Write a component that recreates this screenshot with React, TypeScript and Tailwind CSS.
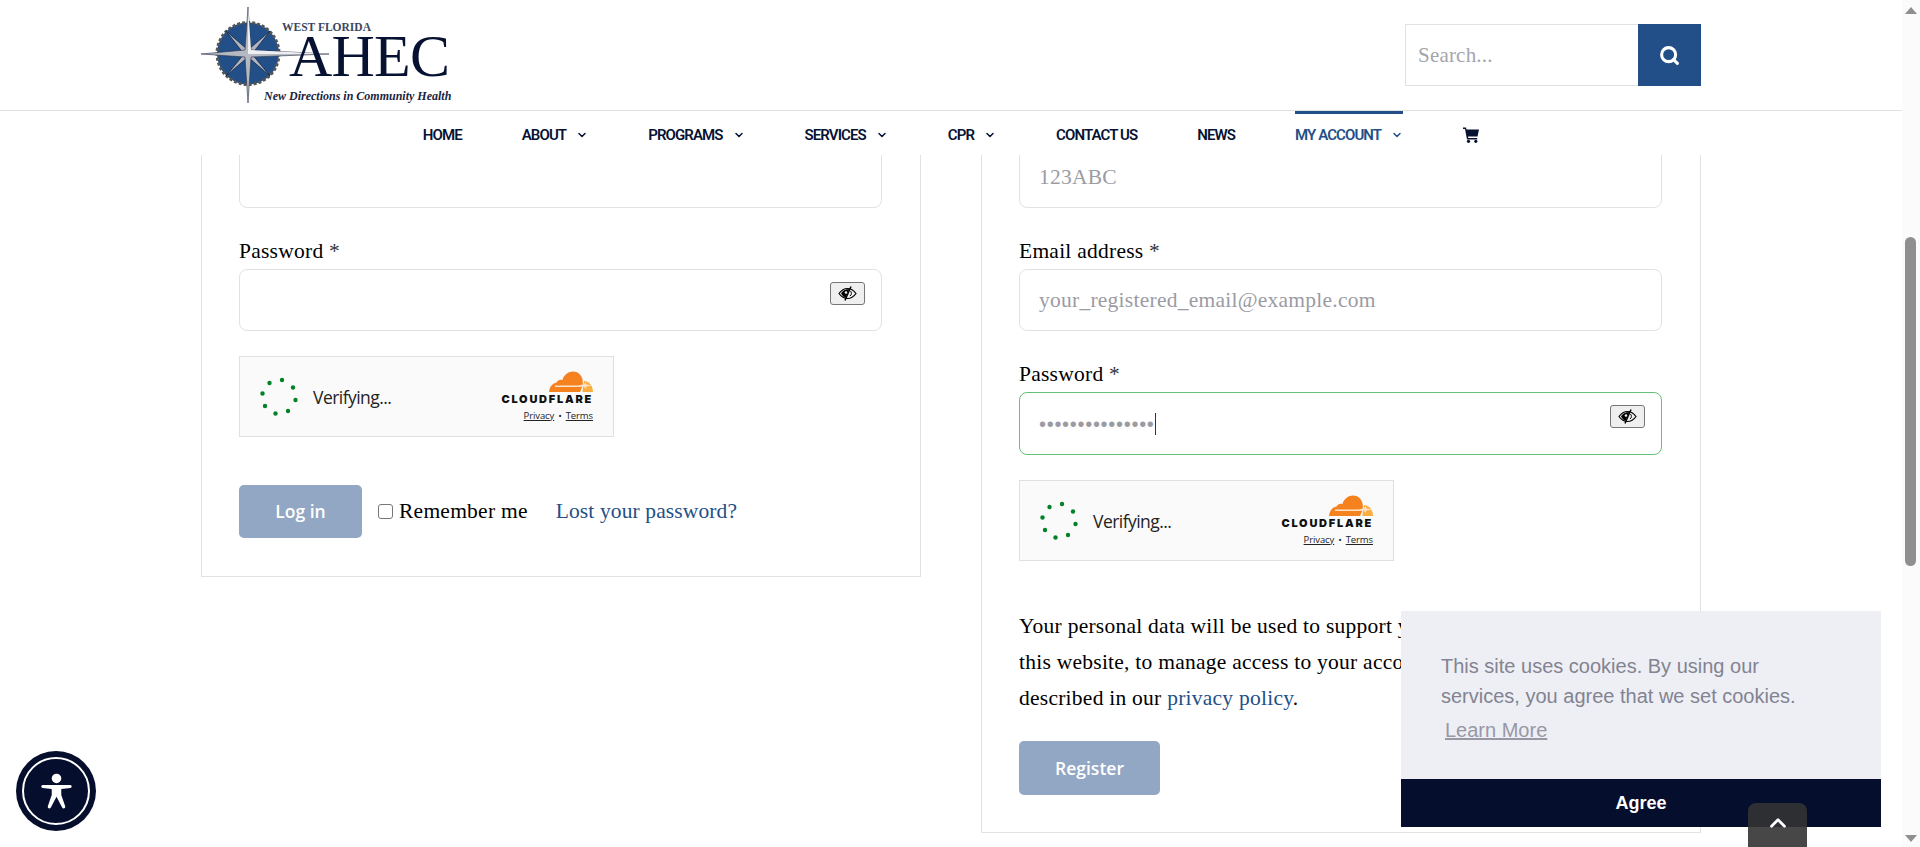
import { ChevronDown, ChevronUp, Search } from "lucide-react";

const NAV_ITEMS = [
  { label: "HOME" },
  { label: "ABOUT", caret: true },
  { label: "PROGRAMS", caret: true },
  { label: "SERVICES", caret: true },
  { label: "CPR", caret: true },
  { label: "CONTACT US" },
  { label: "NEWS" },
  { label: "MY ACCOUNT", caret: true, active: true },
];

const SERIF = "font-['Liberation_Serif',serif] text-[21.5px] tracking-[0.25px] text-black";

function Logo() {
  return (
    <a href="#" className="relative block w-[250px] h-[96px] mt-[7px]">
      <svg className="absolute left-0 top-0" width="132" height="96" viewBox="0 0 132 96">
        <circle cx="47" cy="46.500" r="31" fill="#224f87" stroke="#555" strokeWidth="3" strokeDasharray="3 2" />
        <path d="M25 24L47 43L69 24L51 47L69 69L47 50L25 69L43 47Z" fill="#aeb4c0" stroke="#0f1a36" strokeWidth="0.700" />
        <path d="M47 0L50 43L128 47L50 50L47 96L44 50L0 47L44 43Z" fill="#b4b9c4" stroke="#2c3347" strokeWidth="0.600" />
        <path d="M47 0L50 43L128 47L47 47Z" fill="#eceef1" />
      </svg>
      <span className="absolute left-[81px] top-[15px] font-['Liberation_Serif',serif] text-[11.500px] font-bold leading-none text-[#3b4560] whitespace-nowrap">
        WEST FLORIDA
      </span>
      <span className="absolute left-[88px] top-[27px] font-['Liberation_Serif',serif] text-[60px] leading-[44px] tracking-[-0.8px] text-[#071233] whitespace-nowrap">
        AHEC
      </span>
      <span className="absolute left-[63px] top-[83px] font-['Liberation_Serif',serif] text-[12px] font-bold italic leading-none text-[#1b2440] whitespace-nowrap">
        New Directions in Community Health
      </span>
    </a>
  );
}

function EyeButton() {
  return (
    <span className="absolute right-[16px] top-[12px] flex w-[35px] h-[23px] items-center justify-center rounded-[3px] border border-[#767676] bg-[#efefef]">
      <svg width="19" height="15" viewBox="0 0 19 15">
        <path d="M1 7.500C3.500 4 6 2.500 9.500 2.500C13 2.500 15.500 4 18 7.500C15.500 11 13 12.500 9.500 12.500C6 12.500 3.500 11 1 7.500Z" fill="none" stroke="#000" strokeWidth="1.200" />
        <path d="M3 7.500C5 4.500 7 3.200 11.500 3L7.500 12C5.500 11.500 4.500 9.500 3 7.500Z" fill="#000" />
        <circle cx="8" cy="6.500" r="1.300" fill="#efefef" />
        <path d="M13 0.500L7 14.500" stroke="#000" strokeWidth="1.400" />
        <path d="M12.500 5C13.800 6.500 13.800 8.500 12 10" fill="none" stroke="#000" strokeWidth="1" />
      </svg>
    </span>
  );
}

function CartIcon() {
  return (
    <svg width="16" height="16" viewBox="0 0 16 16" fill="#071233">
      <path d="M0 0.500H3L3.500 2.500H16L14.500 9.500H5L5.300 11H14.200V12.500H4L2 2H0Z" />
      <circle cx="5.500" cy="14.300" r="1.600" />
      <circle cx="12.800" cy="14.300" r="1.600" />
    </svg>
  );
}

function CloudIcon() {
  return (
    <svg width="44" height="21" viewBox="0 0 44 21">
      <path d="M31 21H0C0.500 16 3 12.500 7.500 11.500C9 9 11.500 8.500 13.500 9C15 3.500 19.500 0.500 24 0.500C29 0.500 32.500 4 33.500 8.500C34.500 13 33 17 31 21Z" fill="#f6821f" />
      <path d="M33.500 21H44C44 15 40.500 10.500 35 10C34.500 14 33.500 17.500 33.500 21Z" fill="#fbad41" />
      <path d="M6 14.500H29L35 13.500L36.500 11L37.500 13.500L43 14.500L37.500 15.500L36.500 18L35 15.500L29 16H6Z" fill="#fbe3cb" />
    </svg>
  );
}

function Captcha() {
  const dots = [
    [-9.500, -14],
    [3, -17],
    [14, -9.500],
    [16.500, 3],
    [9, 14],
    [-3.500, 16.500],
    [-14, 9],
    [-16.500, -3.500],
  ];
  return (
    <div className="flex w-[375px] h-[81px] items-center border border-[#e0e0e0] bg-[#fafafa] pl-[17px] pr-[20px]">
      <svg width="44" height="44" viewBox="-22 -22 44 44">
        {dots.map(([x, y]) => (
          <circle key={`${x}-${y}`} cx={x} cy={y} r="2.200" fill="#038127" />
        ))}
      </svg>
      <span className="ml-[12px] pt-[2px] font-['Open_Sans',sans-serif] text-[17.500px] tracking-[-0.55px] text-[#232323]">
        Verifying...
      </span>
      <div className="ml-auto flex flex-col items-end">
        <CloudIcon />
        <span className="font-['Inter',sans-serif] text-[11px] font-black leading-[14px] tracking-[1.750px] text-[#111]">
          CLOUDFLARE
        </span>
        <span className="mt-[3px] flex items-center gap-[4px] font-['Open_Sans',sans-serif] text-[9.500px] tracking-[-0.1px] leading-[14px] text-[#232323]">
          <span className="underline">Privacy</span>
          <span>•</span>
          <span className="underline">Terms</span>
        </span>
      </div>
    </div>
  );
}

function Field({ label, value, placeholder, password, focused }: { label?: string; value?: string; placeholder?: string; password?: boolean; focused?: boolean }) {
  return (
    <div>
      {label && (
        <div className={`mt-[30px] h-[31px] leading-[26px] ${SERIF}`}>
          {label} <span className="text-[#333]">*</span>
        </div>
      )}
      <div
        className={`relative flex items-center rounded-[8px] border bg-white pl-[19px] ${
          focused ? "h-[63px] border-[#65c178]" : "h-[62px] border-[#e2e2e2]"
        }`}
      >
        {placeholder && <span className={`${SERIF} !text-[#9b9ba3]`}>{placeholder}</span>}
        {value && (
          <>
            <span className="font-['Liberation_Sans',sans-serif] text-[20px] tracking-[0.7px] leading-none text-[#9b9ba3]">{value}</span>
            <span className="h-[22px] w-px bg-[#333]" />
          </>
        )}
        {password && <EyeButton />}
      </div>
    </div>
  );
}

function LoginCard() {
  return (
    <section className="border border-[#e2e2e2] pl-[37px] pr-[38px] pb-[38px]">
      <Field />
      <Field label="Password" password />
      <div className="mt-[25px]">
        <Captcha />
      </div>
      <div className={`mt-[48px] flex items-center ${SERIF}`}>
        <button className="flex w-[123px] h-[53px] items-center justify-center rounded-[5px] bg-[#92a7c3] font-['Open_Sans',sans-serif] text-[17.500px] font-semibold tracking-normal text-white">
          Log in
        </button>
        <span className="ml-[16px] h-[15px] w-[15px] rounded-[3px] border border-[#767676] bg-white" />
        <span className="ml-[6px]">Remember me</span>
        <a href="#" className="ml-[28px] tracking-[0.12px] !text-[#224f87]">
          Lost your password?
        </a>
      </div>
    </section>
  );
}

function RegisterCard() {
  return (
    <section className="border border-[#e2e2e2] pl-[37px] pr-[38px] pb-[37px]">
      <Field placeholder="123ABC" />
      <Field label="Email address" placeholder="your_registered_email@example.com" />
      <Field label="Password" value="•••••••••••••••" password focused />
      <div className="mt-[25px]">
        <Captcha />
      </div>
      <p className={`mt-[47px] leading-[36px] whitespace-nowrap ${SERIF}`}>
        Your personal data will be used to support your experience throughout
        <br />
        this website, to manage access to your account, and for other purposes
        <br />
        described in our{" "}
        <a href="#" className="text-[#224f87]">
          privacy policy
        </a>
        .
      </p>
      <button className="mt-[25px] flex w-[141px] h-[54px] items-center justify-center rounded-[5px] bg-[#92a7c3] font-['Open_Sans',sans-serif] text-[17.500px] font-semibold text-white">
        Register
      </button>
    </section>
  );
}

export default function App() {
  return (
    <div className="relative flex h-[847px] w-full overflow-hidden bg-white">
      <div className="flex-1 min-w-0">
        <header className="relative z-10 bg-white">
          <div className="flex h-[110px] items-start justify-between border-b border-[#e2e2e2] pl-[201px] pr-[201px] box-content">
            <Logo />
            <div className="mt-[24px] flex h-[62px] w-[296px]">
              <div className="flex flex-1 items-center border border-r-0 border-[#e2e2e2] pl-[12px] pt-[2px] font-['Liberation_Serif',serif] text-[21px] tracking-[0.2px] text-[#a5a5ac]">
                Search...
              </div>
              <div className="flex w-[63px] items-center justify-center bg-[#224f87]">
                <Search size={21} strokeWidth={3.500} className="text-white" />
              </div>
            </div>
          </div>
          <nav className="flex h-[44px] items-start justify-center gap-[60px] font-['Roboto',sans-serif] text-[15px] font-semibold tracking-[-0.9px] text-[#071233]">
            {NAV_ITEMS.map(({ label, caret, active }) => (
              <a
                key={label}
                href="#"
                className={`flex h-full items-center gap-[10px] border-t-[3px] pt-[1px] ${
                  active ? "border-[#224f87] text-[#224f87]" : "border-transparent"
                }`}
              >
                {label}
                {caret && <ChevronDown size={12} strokeWidth={3} />}
              </a>
            ))}
            <a href="#" className="flex h-full items-center border-t-[3px] border-transparent">
              <CartIcon />
            </a>
          </nav>
        </header>

        <main className="-mt-[10px] ml-[201px] grid w-[1500px] grid-cols-2 items-start gap-[60px]">
          <LoginCard />
          <RegisterCard />
        </main>
      </div>

      {/* browser scrollbar */}
      <aside className="relative w-[18px] shrink-0 bg-[#fbfbfb]">
        <span className="absolute left-[3px] top-[7px] h-0 w-0 border-x-[6px] border-b-[7px] border-x-transparent border-b-[#8f8f8f]" />
        <span className="absolute left-[3px] top-[237px] h-[329px] w-[11px] rounded-full bg-[#8f8f8f]" />
        <span className="absolute left-[3px] bottom-[5px] h-0 w-0 border-x-[6px] border-t-[7px] border-x-transparent border-t-[#8f8f8f]" />
      </aside>

      {/* accessibility widget */}
      <button className="absolute left-[16px] top-[751px] z-20 flex h-[80px] w-[80px] items-center justify-center rounded-full bg-[#060e2e]">
        <span className="flex h-[68px] w-[68px] items-center justify-center rounded-full border-2 border-white">
          <svg width="33" height="39" viewBox="0 0 38 44" fill="#fff">
            <circle cx="19" cy="7" r="5.500" />
            <path d="M3 14.500L35 14.500C37 15 37 17.500 35 18L24.500 19L24.500 26L29 39C29.500 41.500 26.500 42.500 25.500 40.500L19 28L12.500 40.500C11.500 42.500 8.500 41.500 9 39L13.500 26L13.500 19L3 18C1 17.500 1 15 3 14.500Z" />
          </svg>
        </span>
      </button>

      {/* cookie popup */}
      <div className="absolute left-[1401px] top-[611px] z-20 w-[480px] font-['Liberation_Sans',sans-serif]">
        <div className="h-[168px] bg-[#edeff5] pl-[40px] pt-[40px] text-[20px] leading-[30px] text-[#838391]">
          <p>
            This site uses cookies. By using our
            <br />
            services, you agree that we set cookies.
          </p>
          <a href="#" className="mt-[4px] ml-[4px] block underline opacity-80">
            Learn More
          </a>
        </div>
        <div className="flex h-[48px] items-center justify-center bg-[#060e2e] text-[18px] font-bold text-white">
          Agree
        </div>
      </div>

      {/* back to top */}
      <button className="absolute left-[1748px] top-[803px] z-30 flex h-[44px] w-[59px] items-start justify-center rounded-t-[8px] bg-[#333]/90 pt-[7px] text-white">
        <ChevronUp size={26} strokeWidth={2.500} />
      </button>
    </div>
  );
}
